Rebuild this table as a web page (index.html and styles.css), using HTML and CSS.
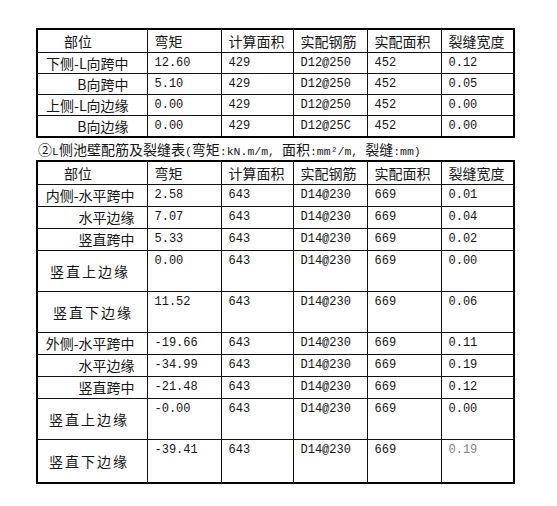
FILE: index.html
```html
<!DOCTYPE html>
<html>
<head>
<meta charset="utf-8">
<link rel="stylesheet" href="styles.css">
</head>
<body>
<div class="page">
  <table class="grid t1">
    <colgroup><col class="c1"><col class="c2"><col class="c3"><col class="c4"><col class="c5"><col class="c6"></colgroup>
    <tr class="head">
      <td class="name hd">部位</td><td class="cj">弯矩</td><td class="cj">计算面积</td><td class="cj">实配钢筋</td><td class="cj">实配面积</td><td class="cj">裂缝宽度</td>
    </tr>
    <tr><td class="name r1">下侧-L向跨中</td><td>12.60</td><td>429</td><td>D12@250</td><td>452</td><td>0.12</td></tr>
    <tr><td class="name r1">B向跨中</td><td>5.10</td><td>429</td><td>D12@250</td><td>452</td><td>0.05</td></tr>
    <tr><td class="name r1">上侧-L向边缘</td><td>0.00</td><td>429</td><td>D12@250</td><td>452</td><td>0.00</td></tr>
    <tr><td class="name r1">B向边缘</td><td>0.00</td><td>429</td><td>D12@25C</td><td>452</td><td>0.00</td></tr>
  </table>
  <div class="caption"><span class="cj">②</span><span class="mono">L</span><span class="cj">侧池壁配筋及裂缝表</span><span class="mono">(</span><span class="cj">弯矩</span><span class="mono">:kN.m/m, </span><span class="cj">面积</span><span class="mono">:mm²/m, </span><span class="cj">裂缝</span><span class="mono">:mm)</span></div>
  <table class="grid t2">
    <colgroup><col class="c1"><col class="c2"><col class="c3"><col class="c4"><col class="c5"><col class="c6"></colgroup>
    <tr class="head">
      <td class="name hd">部位</td><td class="cj">弯矩</td><td class="cj">计算面积</td><td class="cj">实配钢筋</td><td class="cj">实配面积</td><td class="cj">裂缝宽度</td>
    </tr>
    <tr><td class="name r2">内侧-水平跨中</td><td>2.58</td><td>643</td><td>D14@230</td><td>669</td><td>0.01</td></tr>
    <tr><td class="name r2">水平边缘</td><td>7.07</td><td>643</td><td>D14@230</td><td>669</td><td>0.04</td></tr>
    <tr><td class="name r2">竖直跨中</td><td>5.33</td><td>643</td><td>D14@230</td><td>669</td><td>0.02</td></tr>
    <tr class="tall"><td class="name sp p50">竖直上边缘</td><td>0.00</td><td>643</td><td>D14@230</td><td>669</td><td>0.00</td></tr>
    <tr class="tall"><td class="name sp p53">竖直下边缘</td><td>11.52</td><td>643</td><td>D14@230</td><td>669</td><td>0.06</td></tr>
    <tr><td class="name r2">外侧-水平跨中</td><td>-19.66</td><td>643</td><td>D14@230</td><td>669</td><td>0.11</td></tr>
    <tr><td class="name r2">水平边缘</td><td>-34.99</td><td>643</td><td>D14@230</td><td>669</td><td>0.19</td></tr>
    <tr><td class="name r2">竖直跨中</td><td>-21.48</td><td>643</td><td>D14@230</td><td>669</td><td>0.12</td></tr>
    <tr class="tall"><td class="name sp p49">竖直上边缘</td><td>-0.00</td><td>643</td><td>D14@230</td><td>669</td><td>0.00</td></tr>
    <tr class="tall last"><td class="name sp p49">竖直下边缘</td><td>-39.41</td><td>643</td><td>D14@230</td><td>669</td><td class="faded">0.19</td></tr>
  </table>
</div>
</body>
</html>
```
FILE: styles.css
```css
html, body {
  margin: 0;
  padding: 0;
  background: #ffffff;
}
.page {
  width: 557px;
  height: 506px;
  padding: 28px 0 0 36px;
  box-sizing: border-box;
  color: #141414;
}
.grid {
  border-collapse: collapse;
  table-layout: fixed;
  width: 478px;
  border: 2px solid #000;
}
.c1 { width: 110px; }
.c2 { width: 74px; }
.c3 { width: 72px; }
.c4 { width: 74px; }
.c5 { width: 74px; }
.c6 { width: 73px; }
.grid td {
  border: 1px solid #111;
  height: 21px;
  padding: 0 0 0 7px;
  font-family: "Liberation Mono", monospace;
  font-size: 12px;
  line-height: 21px;
  vertical-align: middle;
  white-space: nowrap;
  overflow: hidden;
}
.t1 td {
  height: 20px;
  line-height: 20px;
}
.grid td.cj,
.grid td.name {
  font-family: "Noto Sans CJK SC", sans-serif;
  font-size: 14px;
}
.grid .head td {
  height: 22px;
}
.grid td.hd {
  padding-left: 26px;
  text-align: left;
}
.grid td.r1 {
  text-align: right;
  padding: 0 18px 0 0;
}
.grid td.r2 {
  text-align: right;
  padding: 0 12px 0 0;
}
.grid td.sp {
  letter-spacing: 2px;
}
.grid td.p49 { padding-left: 11px; }
.grid td.p50 { padding-left: 12px; }
.grid td.p53 { padding-left: 15px; }
.grid .tall td {
  height: 40px;
  vertical-align: top;
  padding-top: 0;
}
.grid .tall td.name {
  vertical-align: middle;
}
.grid .last td {
  height: 42px;
}
.grid td.faded {
  color: #8c7c84;
}
.caption {
  height: 22px;
  line-height: 22px;
  padding-left: 2px;
  white-space: nowrap;
}
.caption .cj {
  font-family: "Noto Sans CJK SC", sans-serif;
  font-size: 14px;
}
.caption .mono {
  font-family: "Liberation Mono", monospace;
  font-size: 11.5px;
}
```
